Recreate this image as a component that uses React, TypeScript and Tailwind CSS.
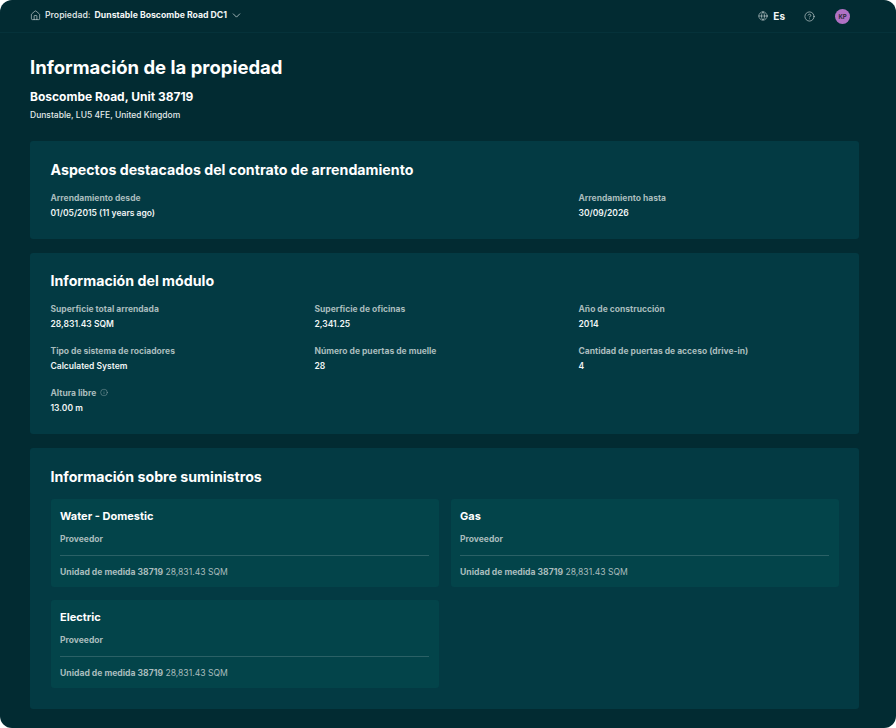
import { ChevronDown, CircleHelp, Globe, House, Info } from "lucide-react";

function Field({ label, value, info }: { label: string; value: string; info?: boolean }) {
  return (
    <div>
      <div className="flex translate-y-[0.5px] items-center gap-1 text-[8.5px] leading-[14px] font-bold text-[#a9bcbd]">
        {label}
        {info ? <Info size={8} strokeWidth={1.25} className="text-[#a9bcbd]" /> : null}
      </div>
      <div className="mt-[2px] text-[8.5px] leading-[14px] font-semibold text-[#f2f6f6]">{value}</div>
    </div>
  );
}

function Section({ title, children }: { title: string; children: React.ReactNode }) {
  return (
    <section className="rounded-[3px] bg-[#033a43] px-[20.5px] pt-[18.5px] pb-[19px]">
      <h2 className="mb-[0.5px] text-[14.2px] leading-[20px] font-bold text-white">{title}</h2>
      {children}
    </section>
  );
}

function UtilityCard({ name }: { name: string }) {
  return (
    <div className="h-[88px] rounded-[3px] bg-[#03444a] px-[9.5px] pt-[9px]">
      <h3 className="text-[11px] leading-[16px] font-bold text-white">{name}</h3>
      <div className="mt-[8.5px] text-[8.5px] leading-[14px] font-bold text-[#a9bcbd]">Proveedor</div>
      <div className="mt-[8.5px] border-t border-[#2b6166] pt-[9px] text-[8.6px] leading-[14px] text-[#a9bcbd]">
        <span className="font-bold">Unidad de medida 38719</span> 28,831.43 SQM
      </div>
    </div>
  );
}

export default function App() {
  return (
    <div className="h-[728px] w-[896px] overflow-hidden bg-white font-['Inter',sans-serif]">
      <div className="h-full rounded-[12px] bg-[#022b32]">
        <header className="flex h-[33px] items-center justify-between border-b border-[#05323a] pr-[46px] pl-[30px]">
          <div className="flex items-center text-[8.7px] font-bold">
            <House size={11} strokeWidth={1.25} className="text-[#e6eeee]" />
            <span className="ml-[4px] font-semibold text-[#d5dfdf]">Propiedad:</span>
            <span className="ml-[4px] text-[#f2f6f6]">Dunstable Boscombe Road DC1</span>
            <ChevronDown size={13} strokeWidth={1.25} className="ml-[3px] text-[#e6eeee]" />
          </div>
          <div className="flex items-center">
            <Globe size={10} strokeWidth={1.25} className="text-[#e6eeee]" />
            <span className="ml-[5px] text-[10px] font-bold text-[#f2f6f6]">Es</span>
            <CircleHelp size={11} strokeWidth={1.25} className="ml-[19px] text-[#e6eeee]" />
            <div className="ml-[20px] flex h-[15px] w-[15px] items-center justify-center rounded-full bg-[#b071c4] text-[6px] font-bold text-[#2b2b3a]">
              KP
            </div>
          </div>
        </header>

        <main className="pt-[21px] pr-[37px] pl-[30px]">
          <h1 className="text-[18.5px] leading-[26px] font-bold text-white">Información de la propiedad</h1>
          <div className="mt-[9px] text-[12px] leading-[16px] font-bold text-white">Boscombe Road, Unit 38719</div>
          <div className="mt-[3px] text-[8.5px] leading-[14px] font-medium text-[#e3eaea]">Dunstable, LU5 4FE, United Kingdom</div>

          <div className="mt-[19px] flex flex-col gap-[14px]">
            <Section title="Aspectos destacados del contrato de arrendamiento">
              <div className="mt-[10px] grid grid-cols-[264px_264px_1fr]">
                <div className="col-span-2">
                  <Field label="Arrendamiento desde" value="01/05/2015 (11 years ago)" />
                </div>
                <Field label="Arrendamiento hasta" value="30/09/2026" />
              </div>
            </Section>

            <Section title="Información del módulo">
              <div className="mt-[10px] grid grid-cols-[264px_264px_1fr] gap-y-[12px]">
                <Field label="Superficie total arrendada" value="28,831.43 SQM" />
                <Field label="Superficie de oficinas" value="2,341.25" />
                <Field label="Año de construcción" value="2014" />
                <Field label="Tipo de sistema de rociadores" value="Calculated System" />
                <Field label="Número de puertas de muelle" value="28" />
                <Field label="Cantidad de puertas de acceso (drive-in)" value="4" />
                <Field label="Altura libre" value="13.00 m" info />
              </div>
            </Section>

            <Section title="Información sobre suministros">
              <div className="mt-[12px] mb-[2px] grid grid-cols-2 gap-x-[12px] gap-y-[13px]">
                <UtilityCard name="Water - Domestic" />
                <UtilityCard name="Gas" />
                <UtilityCard name="Electric" />
              </div>
            </Section>
          </div>
        </main>
      </div>
    </div>
  );
}
